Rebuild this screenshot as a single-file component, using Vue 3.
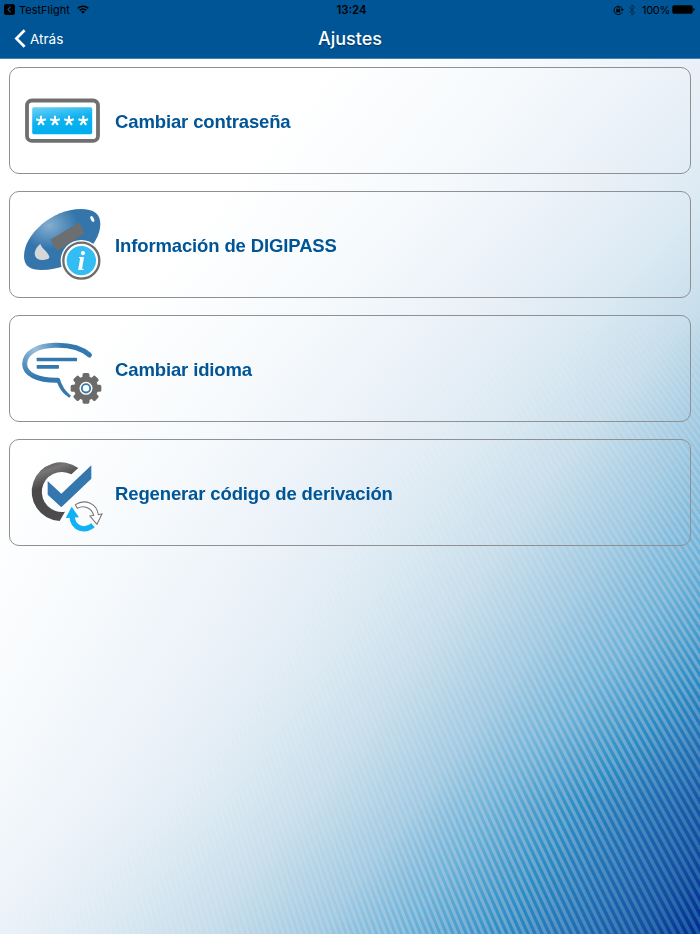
<template>
  <div class="screen">
    <canvas ref="backdrop" class="backdrop" width="700" height="876"></canvas>

    <header class="header">
      <div class="status-bar">
        <div class="status-side">
          <svg class="app-icon" viewBox="0 0 11 11">
            <rect width="11" height="11" rx="2.5" fill="#000" />
            <path d="M6.6 2.6 L3.9 5.5 L6.6 8.4" fill="none" stroke="#005596" stroke-width="1.2" />
          </svg>
          <span class="app-name">TestFlight</span>
          <svg class="wifi" viewBox="0 0 12 9">
            <g fill="none" stroke="#000" stroke-width="1.5">
              <path d="M0.7 3.4 A7.6 7.6 0 0 1 11.3 3.4" />
              <path d="M2.7 5.4 A4.8 4.8 0 0 1 9.3 5.4" />
            </g>
            <path d="M4.1 6.7 A2.8 2.8 0 0 1 7.9 6.7 L6 8.8 Z" />
          </svg>
        </div>
        <span class="clock">13:24</span>
        <div class="status-side right">
          <svg class="lock" viewBox="0 0 11 10">
            <path d="M9 7.3 A4.2 4.2 0 1 1 9.2 4" fill="none" stroke="#000" stroke-width="0.9" />
            <path d="M7.8 4.1 H10.8 L9.3 6.2 Z" />
            <rect x="3.2" y="4.4" width="4" height="3" />
            <path d="M4 4.6 V3.6 A1.2 1.2 0 0 1 6.4 3.6 V4.6" fill="none" stroke="#000" stroke-width="0.8" />
          </svg>
          <svg class="bluetooth" viewBox="0 0 8 12">
            <path d="M1 3.2 L6.6 8.6 L4 11.2 V0.8 L6.6 3.4 L1 8.8" fill="none" stroke="#07294a" stroke-width="1" />
          </svg>
          <span class="percent">100%</span>
          <svg class="battery" viewBox="0 0 23 9">
            <rect x="0.3" y="0.3" width="20.4" height="8.4" rx="1.6" />
            <path d="M21.3 3 Q22.6 3.4 22.6 4.5 Q22.6 5.6 21.3 6 Z" />
          </svg>
        </div>
      </div>

      <div class="nav-bar">
        <a href="#" class="back" @click.prevent="goBack">
          <svg class="chevron" viewBox="0 0 12 19">
            <path d="M10.6 1.3 L2.4 9.5 L10.6 17.7" fill="none" stroke="#fff" stroke-width="2.7" />
          </svg>
          <span>Atrás</span>
        </a>
        <h1>Ajustes</h1>
        <span></span>
      </div>
    </header>

    <main class="menu">
      <button v-for="item in items" :key="item.id" class="card" type="button">
        <svg v-if="item.id === 'password'" class="icon" viewBox="0 0 96 105">
          <defs>
            <linearGradient id="field" x1="0" y1="0" x2="0.35" y2="1">
              <stop offset="0" stop-color="#6fd0f6" />
              <stop offset="0.55" stop-color="#0fb2f0" />
              <stop offset="1" stop-color="#00aeef" />
            </linearGradient>
          </defs>
          <rect x="17" y="32.5" width="71" height="40.4" rx="5" fill="#fff" stroke="#6f6f70" stroke-width="3.8" />
          <rect x="22.2" y="39.2" width="60" height="27" rx="1.6" fill="url(#field)" />
          <g fill="none" stroke="#fff" stroke-width="2.1">
            <path
              v-for="x in [31, 45, 59, 73.3]"
              :key="x"
              :transform="`translate(${x} 52.8)`"
              d="M0 0 V-5 M0 0 L4.8 -1.5 M0 0 L2.9 4 M0 0 L-2.9 4 M0 0 L-4.8 -1.5"
            />
          </g>
        </svg>

        <svg v-else-if="item.id === 'device'" class="icon" viewBox="0 0 96 105">
          <defs>
            <radialGradient id="shell" cx="0.33" cy="0.27" r="0.38">
              <stop offset="0" stop-color="#86aed0" />
              <stop offset="1" stop-color="#3476ac" />
            </radialGradient>
          </defs>
          <g transform="translate(0 3) scale(0.3333)">
            <path d="M42 183 C42 118 128 42 212 42 C252 42 271 56 271 88 C270 150 195 225 95 225 C60 225 42 214 42 183 Z" fill="url(#shell)" />
            <path d="M121 134 L208 82 L223 115 L142 168 Z" fill="#6d6e70" />
            <path d="M91 147 C78 157 71 172 76 184 C80 195 92 196 105 194 C114 193 119 190 118 185 C114 170 98 164 91 147 Z" fill="#d6d7d9" />
            <ellipse cx="247" cy="72" rx="4.5" ry="9.5" transform="rotate(-27 247 72)" fill="#fff" />
            <circle cx="214" cy="197" r="62" fill="#fff" />
            <circle cx="214" cy="197" r="54" fill="#fff" stroke="#6f6c6c" stroke-width="7" />
            <circle cx="214" cy="197" r="44" fill="#33bdf2" />
            <text x="214" y="225" class="info-letter">i</text>
          </g>
        </svg>

        <svg v-else-if="item.id === 'language'" class="icon" viewBox="0 0 96 105">
          <defs>
            <radialGradient id="bubble" gradientUnits="userSpaceOnUse" cx="75" cy="72" r="85">
              <stop offset="0" stop-color="#9cc0dc" />
              <stop offset="1" stop-color="#3478ae" />
            </radialGradient>
          </defs>
          <g transform="translate(0 9) scale(0.3333)">
            <path d="M238 90 C212 67 170 60 135 61 C82 62 44 83 44 117 C44 147 82 167 143 166" fill="none" stroke="url(#bubble)" stroke-width="15" stroke-linecap="round" />
            <path d="M140 168 L150 163 C157 185 167 200 183 212 L178 218 C159 206 147 191 140 168 Z" fill="#3478ae" />
            <rect x="80" y="98" width="121" height="11" rx="2" fill="#3478ae" />
            <rect x="80" y="120" width="67" height="11" rx="2" fill="#3478ae" />
            <g transform="translate(228 190)" fill="#6d6a6a">
              <rect v-for="n in 8" :key="n" x="-10.5" y="-46" width="21" height="20" rx="5" :transform="`rotate(${n * 45})`" />
              <circle r="36" />
              <circle r="19.5" fill="#fff" />
              <circle r="12.5" fill="#fff" stroke="#3478ae" stroke-width="5.5" />
            </g>
          </g>
        </svg>

        <svg v-else class="icon" viewBox="0 0 96 105">
          <defs>
            <linearGradient id="ring" x1="0" y1="0" x2="0.3" y2="1">
              <stop offset="0" stop-color="#454344" />
              <stop offset="0.22" stop-color="#777576" />
              <stop offset="0.45" stop-color="#4a4849" />
              <stop offset="1" stop-color="#4d4b4c" />
            </linearGradient>
          </defs>
          <g transform="translate(0 10) scale(0.3333)">
            <path d="M205 54 A88 88 0 1 0 149 213 L165 185 A60 60 0 1 1 184 73 Z" fill="url(#ring)" />
            <path d="M113 93 L154 131 L244 46 V86 L154 172 L113 134 Z" fill="#3477ae" stroke="#fff" stroke-width="6" paint-order="stroke" />
            <path d="M186 198 C188 240 228 244 249 226" fill="none" stroke="#10b2f3" stroke-width="16" />
            <path d="M185 170 L167 204 L207 202 Z" fill="#10b2f3" />
            <path d="M196 164 C224 146 260 159 265 194 L276 192 L261 223 L240 198 L251 196 C245 174 222 164 202 175 Z" fill="#fff" stroke="#777" stroke-width="3.2" />
          </g>
        </svg>

        <span class="label">{{ item.label }}</span>
      </button>
    </main>
  </div>
</template>

<script setup>
import { ref, onMounted } from 'vue'

const items = [
  { id: 'password', label: 'Cambiar contraseña' },
  { id: 'device', label: 'Información de DIGIPASS' },
  { id: 'language', label: 'Cambiar idioma' },
  { id: 'derivation', label: 'Regenerar código de derivación' },
]

const backdrop = ref(null)

const TOP = 58
const BOTTOM = 934

// x of every colour level, row by row
const rows = [
  [60, [330, 545, 712, 850, 960, 1050, 1120, 1190, 1260, 1330, 1410]],
  [200, [210, 430, 575, 695, 810, 900, 980, 1070, 1140, 1210, 1290]],
  [350, [90, 290, 440, 550, 660, 745, 835, 940, 1010, 1080, 1160]],
  [500, [0, 170, 320, 425, 535, 640, 740, 855, 930, 1000, 1080]],
  [650, [-80, 80, 232, 325, 425, 530, 625, 720, 795, 860, 940]],
  [800, [-160, -10, 130, 215, 315, 420, 495, 580, 655, 720, 795]],
  [934, [-240, -110, 10, 90, 200, 315, 405, 500, 580, 645, 715]],
]

const baseColors = ['#ffffff', '#f5f9fc', '#e9f0f8', '#dceaf3', '#c6deeb', '#a0cbe3', '#6ab2d9', '#2a8dc5', '#1d6ab2', '#144da0', '#00208c']
const stripeColors = ['#ffffff', '#f5f9fc', '#eaf1f8', '#dfebf3', '#cee0ec', '#b4d1e5', '#9cc3dd', '#7dacd0', '#5490c2', '#3779b3', '#1261a4']

const levelsAt = (y) => {
  let i = 0
  while (i < rows.length - 2 && y > rows[i + 1][0]) i++
  const [y0, a] = rows[i]
  const [y1, b] = rows[i + 1]
  const t = (y - y0) / (y1 - y0)
  return a.map((x, n) => x + (b[n] - x) * t)
}

const paintField = (ctx, colors, alphaAt) => {
  for (let y = TOP; y < BOTTOM; y++) {
    const xs = levelsAt(y)
    const start = xs[0]
    const length = xs[xs.length - 1] - start
    const gradient = ctx.createLinearGradient(start, 0, start + length, 0)
    xs.forEach((x, n) => gradient.addColorStop((x - start) / length, colors[n]))
    ctx.globalAlpha = alphaAt(y)
    ctx.fillStyle = gradient
    ctx.fillRect(0, y - TOP, 700, 1)
  }
}

// the stripes fan out: slope and spacing both grow to the right
const slopeAt = (x) => 0.24 + 0.0005 * (x - 100)
const stepAt = (x) => 5.6 + 3 / (1 + Math.exp(-(x - 530) / 110))

const drawBackdrop = () => {
  const ctx = backdrop.value.getContext('2d')
  paintField(ctx, baseColors, () => 1)

  const stripes = new Path2D()
  const reach = BOTTOM - 270
  for (let x = -20; x < 1250; x += stepAt(x)) {
    const right = x + stepAt(x) * 0.5
    stripes.moveTo(x, BOTTOM - TOP)
    stripes.lineTo(right, BOTTOM - TOP)
    stripes.lineTo(right - slopeAt(right) * reach, BOTTOM - TOP - reach)
    stripes.lineTo(x - slopeAt(x) * reach, BOTTOM - TOP - reach)
    stripes.closePath()
  }
  ctx.save()
  ctx.clip(stripes)
  paintField(ctx, stripeColors, (y) => 0.8 * Math.min(1, Math.max(0, (y - 270) / 110)))
  ctx.restore()
}

const goBack = () => {
  window.history.back()
}

onMounted(drawBackdrop)
</script>

<style>
body {
  margin: 0;
  background: #fff;
}
</style>

<style scoped>
.screen {
  position: relative;
  width: 700px;
  height: 934px;
  overflow: hidden;
  font-family: Inter, 'Liberation Sans', sans-serif;
}

.backdrop {
  position: absolute;
  left: 0;
  top: 58px;
}

.header {
  position: relative;
  height: 58px;
  background: #005596;
  border-bottom: 1px solid #4580b0;
}

.status-bar {
  display: grid;
  grid-template-columns: 1fr auto 1fr;
  align-items: center;
  height: 19px;
  padding: 0 5px 0 4px;
  color: #000;
}

.status-side {
  display: flex;
  align-items: center;
}

.status-side.right {
  justify-content: flex-end;
}

.app-icon {
  width: 11px;
  height: 11px;
}

.app-name {
  margin: 0 7px 0 4px;
  font-size: 11px;
}

.wifi {
  width: 12px;
  height: 9px;
}

.clock {
  padding-left: 4px;
  font-size: 11.3px;
  font-weight: 600;
}

.lock {
  width: 11px;
  height: 10px;
}

.bluetooth {
  width: 8px;
  height: 12px;
  margin: 0 6px 0 4px;
}

.percent {
  font-size: 11px;
  letter-spacing: -0.3px;
  margin-right: 2px;
}

.battery {
  width: 23px;
  height: 9px;
}

.nav-bar {
  display: grid;
  grid-template-columns: 1fr auto 1fr;
  align-items: center;
  height: 39px;
  padding: 0 14px;
  color: #fff;
}

.back {
  display: flex;
  align-items: center;
  gap: 4px;
  font-size: 13.5px;
  color: #fff;
  text-decoration: none;
}

.chevron {
  width: 12px;
  height: 19px;
}

h1 {
  margin: 0;
  font-size: 18px;
  font-weight: 500;
  line-height: 24px;
  text-shadow: 0 1px 1px rgba(0, 0, 0, 0.4);
}

.menu {
  position: relative;
  display: flex;
  flex-direction: column;
  gap: 17px;
  padding: 8px 9px 0;
}

.card {
  display: flex;
  align-items: center;
  gap: 9px;
  box-sizing: border-box;
  width: 100%;
  height: 107px;
  padding: 0;
  border: 1px solid #8e9092;
  border-radius: 10px;
  background: transparent;
  text-align: left;
}

.icon {
  flex: none;
  width: 96px;
  height: 105px;
}

.info-letter {
  font: italic bold 82px 'Liberation Serif', serif;
  text-anchor: middle;
  fill: #fff;
}

.label {
  padding-top: 2px;
  font-family: 'Liberation Sans', sans-serif;
  font-size: 18.5px;
  font-weight: 700;
  letter-spacing: -0.13px;
  color: #005596;
}
</style>
